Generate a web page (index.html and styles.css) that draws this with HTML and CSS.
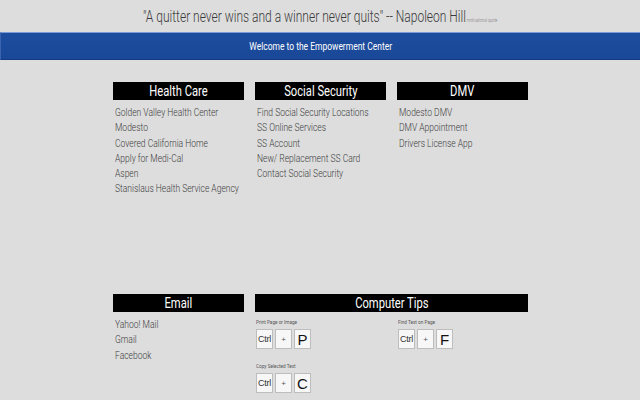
FILE: index.html
```html
<!DOCTYPE html>
<html>
<head>
<meta charset="utf-8">
<link rel="stylesheet" href="styles.css">
</head>
<body>
<div class="quote"><span class="quote-text">"A quitter never wins and a winner never quits" -- Napoleon Hill<span class="quote-tiny">motivational quote</span></span></div>
<div class="banner"><span class="banner-text">Welcome to the Empowerment Center</span></div>
<div class="grid">
  <section class="card">
    <h2 class="head"><span class="cond">Health Care</span></h2>
    <ul class="list">
      <li>Golden Valley Health Center</li>
      <li>Modesto</li>
      <li>Covered California Home</li>
      <li>Apply for Medi-Cal</li>
      <li>Aspen</li>
      <li>Stanislaus Health Service Agency</li>
    </ul>
  </section>
  <section class="card">
    <h2 class="head"><span class="cond">Social Security</span></h2>
    <ul class="list">
      <li>Find Social Security Locations</li>
      <li>SS Online Services</li>
      <li>SS Account</li>
      <li>New/ Replacement SS Card</li>
      <li>Contact Social Security</li>
    </ul>
  </section>
  <section class="card">
    <h2 class="head"><span class="cond">DMV</span></h2>
    <ul class="list">
      <li>Modesto DMV</li>
      <li>DMV Appointment</li>
      <li>Drivers License App</li>
    </ul>
  </section>
  <section class="card">
    <h2 class="head"><span class="cond">Email</span></h2>
    <ul class="list">
      <li>Yahoo! Mail</li>
      <li>Gmail</li>
      <li>Facebook</li>
    </ul>
  </section>
  <section class="card tips">
    <h2 class="head"><span class="cond">Computer Tips</span></h2>
    <div class="tip-cols">
      <div class="tip-col">
        <div class="tip-label">Print Page or Image</div>
        <div class="keys"><span class="key small">Ctrl</span><span class="key plus">+</span><span class="key big">P</span></div>
        <div class="tip-label second">Copy Selected Text</div>
        <div class="keys"><span class="key small">Ctrl</span><span class="key plus">+</span><span class="key big">C</span></div>
      </div>
      <div class="tip-col">
        <div class="tip-label">Find Text on Page</div>
        <div class="keys"><span class="key small">Ctrl</span><span class="key plus">+</span><span class="key big">F</span></div>
      </div>
    </div>
  </section>
</div>
</body>
</html>
```

FILE: styles.css
```css
html, body {
  margin: 0;
  padding: 0;
}
body {
  background: #dddddd;
  font-family: Roboto, "Liberation Sans", sans-serif;
  width: 640px;
  height: 400px;
  overflow: hidden;
}
.quote {
  height: 32px;
  display: flex;
  align-items: center;
  justify-content: center;
}
.quote-text {
  display: inline-block;
  font-size: 16px;
  font-weight: 300;
  color: #3a3a3a;
  transform: scaleX(0.75);
  white-space: nowrap;
  margin-left: 0;
}
.quote-tiny {
  font-size: 5px;
  color: #777;
  margin-left: 1px;
}
.banner {
  height: 28px;
  box-sizing: border-box;
  background: linear-gradient(#1d4d9f, #1a4898);
  border-top: 1px solid #7b9bd6;
  border-bottom: 1px solid #163c80;
  border-left: 1px solid #3a64b0;
  display: flex;
  align-items: center;
  justify-content: center;
}
.banner-text {
  display: inline-block;
  color: #ffffff;
  font-size: 11px;
  transform: scaleX(0.77);
  white-space: nowrap;
}
.grid {
  display: grid;
  grid-template-columns: repeat(3, 131px);
  grid-template-rows: 212px auto;
  column-gap: 11px;
  margin: 22px 0 0 113px;
}
.head {
  margin: 0;
  height: 18px;
  line-height: 18px;
  background: #000;
  color: #fff;
  font-size: 14px;
  font-weight: 400;
  text-align: center;
}
.cond {
  display: inline-block;
  transform: scaleX(0.8);
  white-space: nowrap;
}
.list {
  list-style: none;
  margin: 0;
  padding: 5px 0 0 2px;
  font-size: 10.5px;
  font-weight: 300;
  line-height: 15.3px;
  color: #3c3c3c;
}
.list li {
  transform: scaleX(0.81);
  transform-origin: left center;
  white-space: nowrap;
}
.tips {
  grid-column: span 2;
}
.tip-cols {
  display: grid;
  grid-template-columns: 131px 131px;
  column-gap: 11px;
  padding-top: 6px;
}
.tip-col {
  padding-left: 1px;
}
.tip-label {
  font-size: 5.5px;
  line-height: 8px;
  color: #555;
  margin-bottom: 3px;
  transform: scaleX(0.85);
  transform-origin: left center;
  white-space: nowrap;
}
.tip-label.second {
  margin-top: 13px;
}
.keys {
  display: flex;
  gap: 2px;
}
.key {
  box-sizing: border-box;
  width: 17px;
  height: 20px;
  background: #f7f7f7;
  border: 1px solid #bdbdbd;
  display: flex;
  align-items: center;
  justify-content: center;
  color: #222;
  font-family: "Liberation Sans", Arial, sans-serif;
  overflow: hidden;
}
.key.small {
  font-size: 9px;
  color: #333;
  letter-spacing: -0.3px;
}
.key.plus {
  font-size: 8px;
  color: #555;
}
.key.big {
  font-size: 15px;
  font-weight: 400;
  color: #111;
}
```
